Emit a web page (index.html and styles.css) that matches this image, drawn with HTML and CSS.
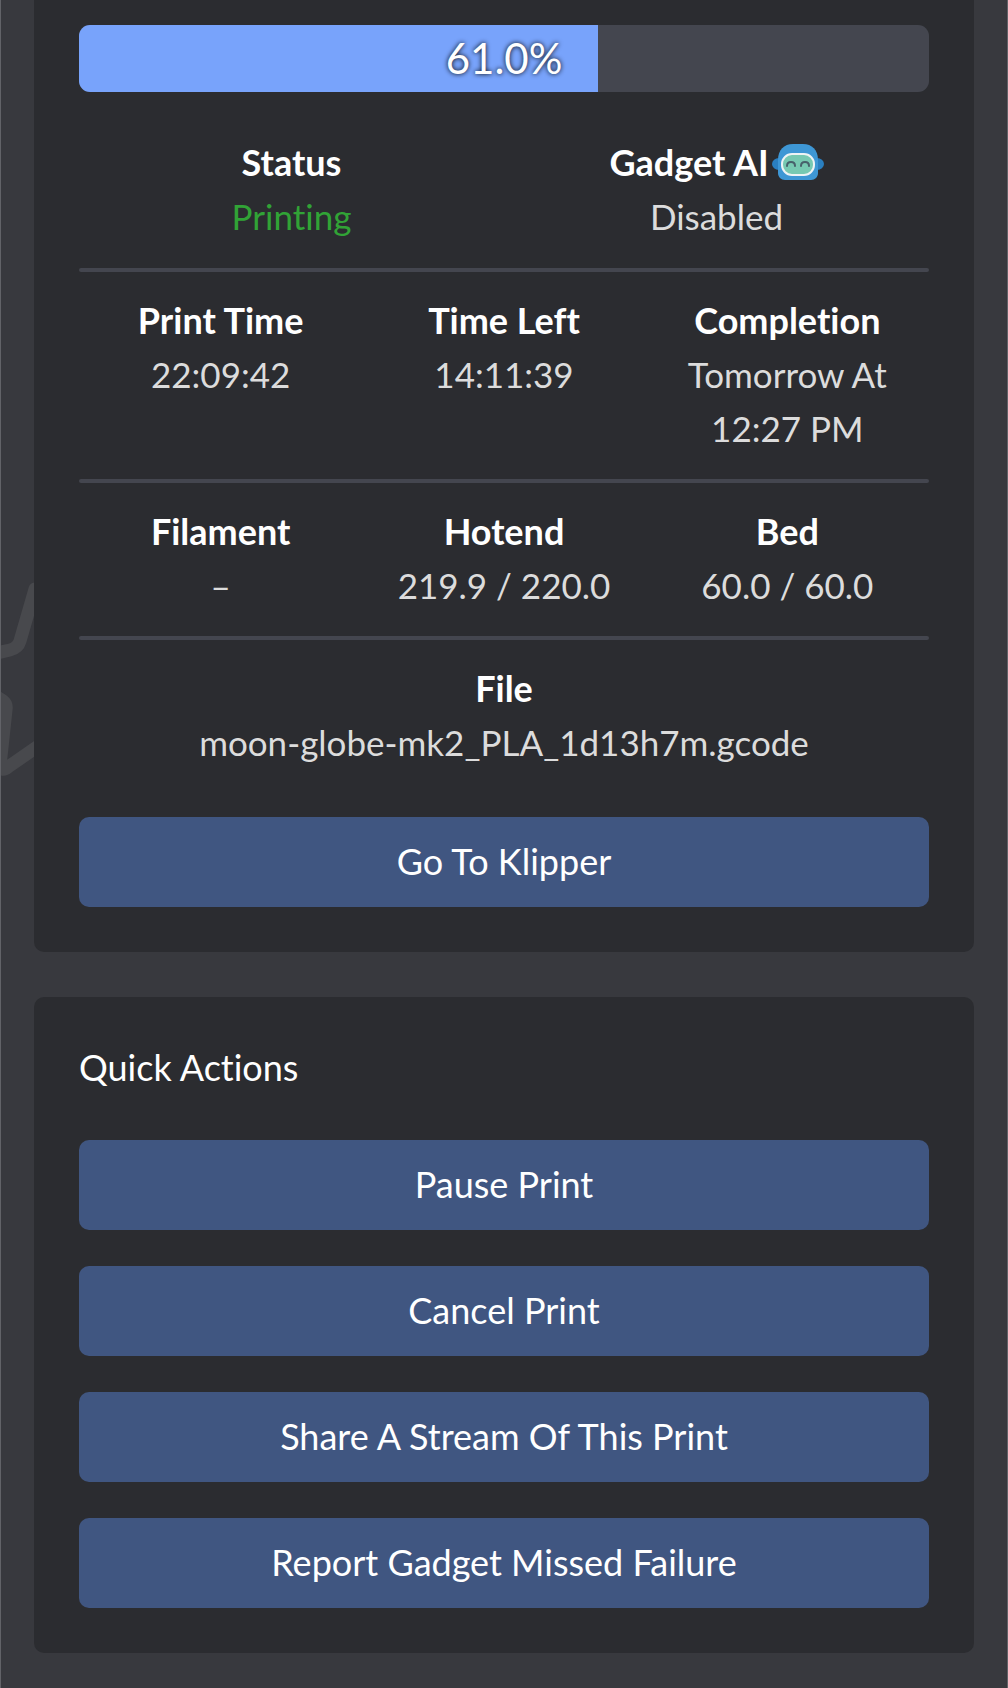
FILE: index.html
```
<!DOCTYPE html>
<html lang="en">
<head>
<meta charset="utf-8">
<meta name="viewport" content="width=device-width, initial-scale=1">
<title>Printer Status</title>
<link rel="stylesheet" href="styles.css">
</head>
<body>
<svg class="backdrop" viewBox="0 0 100 240" aria-hidden="true">
  <path d="M-12 95 L10 90 Q18 88 20 81 L35 29"/>
  <path d="M-12 131 L3 141 Q7 144 6 150 L0 206 Q2 212 8 207 L44 182"/>
</svg>
<main class="page">
  <section class="card card-status">
    <div class="progress" role="progressbar" aria-label="Print progress" aria-valuenow="61" aria-valuemin="0" aria-valuemax="100">
      <div class="progress-fill" style="width: 61%"></div>
      <span class="progress-label">61.0%</span>
    </div>
    <dl class="stats stats-two">
      <div class="stat">
        <dt>Status</dt>
        <dd class="printing">Printing</dd>
      </div>
      <div class="stat">
        <dt class="with-icon">Gadget AI
          <svg class="robot" viewBox="0 0 52 36" aria-hidden="true">
            <ellipse cx="7" cy="20" rx="7" ry="6" fill="#2a7fc0"/>
            <ellipse cx="45" cy="20" rx="7" ry="6" fill="#2a7fc0"/>
            <path d="M6 16C6 6 12 0 21 0h10c9 0 15 6 15 16v13c0 4-3 7-7 7H13c-4 0-7-3-7-7z" fill="#3e97d5"/>
            <rect x="10" y="10" width="32" height="21" rx="10" fill="#77c9b2" stroke="#eef3f5" stroke-width="2"/>
            <path d="M15 22q0-4 4-4t4 4M29 22q0-4 4-4t4 4" fill="none" stroke="#47606b" stroke-width="2" stroke-linecap="round"/>
          </svg>
        </dt>
        <dd>Disabled</dd>
      </div>
    </dl>
    <hr>
    <dl class="stats">
      <div class="stat">
        <dt>Print Time</dt>
        <dd>22:09:42</dd>
      </div>
      <div class="stat">
        <dt>Time Left</dt>
        <dd>14:11:39</dd>
      </div>
      <div class="stat">
        <dt>Completion</dt>
        <dd>Tomorrow At 12:27 PM</dd>
      </div>
    </dl>
    <hr>
    <dl class="stats">
      <div class="stat">
        <dt>Filament</dt>
        <dd>–</dd>
      </div>
      <div class="stat">
        <dt>Hotend</dt>
        <dd>219.9 / 220.0</dd>
      </div>
      <div class="stat">
        <dt>Bed</dt>
        <dd>60.0 / 60.0</dd>
      </div>
    </dl>
    <hr>
    <dl class="stats stats-one">
      <div class="stat">
        <dt>File</dt>
        <dd>moon-globe-mk2_PLA_1d13h7m.gcode</dd>
      </div>
    </dl>
    <button class="button button-spaced" type="button">Go To Klipper</button>
  </section>
  <section class="card">
    <h2 class="title">Quick Actions</h2>
    <div class="actions">
      <button class="button" type="button">Pause Print</button>
      <button class="button" type="button">Cancel Print</button>
      <button class="button" type="button">Share A Stream Of This Print</button>
      <button class="button" type="button">Report Gadget Missed Failure</button>
    </div>
  </section>
</main>
</body>
</html>
```
FILE: styles.css
```
* {
  box-sizing: border-box;
}

body {
  position: relative;
  margin: 0;
  background: #38393e;
  color: #fff;
  font-family: Lato, sans-serif;
  font-size: 36px;
  line-height: 54px;
  font-variant-ligatures: none;
}

/* Faint line drawing behind the cards */
.backdrop {
  position: absolute;
  top: 560px;
  left: 0;
  width: 100px;
  height: 240px;
  fill: none;
  stroke: #48494d;
  stroke-width: 13px;
  stroke-linecap: round;
  stroke-linejoin: round;
}

.page {
  position: relative;
  display: flex;
  flex-direction: column;
  gap: 45px;
  padding: 0 33px 35px;
  border: solid #626368;
  border-width: 0 1px;
}

.card {
  padding: 43px 45px 45px;
  border-radius: 10px;
  background: #2b2c30;
}

.card-status {
  padding-top: 25px;
  padding-bottom: 45px;
  border-radius: 0 0 10px 10px;
}

.progress {
  position: relative;
  height: 67px;
  margin-bottom: 43px;
  overflow: hidden;
  border-radius: 11px;
  background: #44464f;
}

.progress-fill {
  height: 100%;
  background: #78a3fb;
}

.progress-label {
  position: absolute;
  inset: 0;
  font-size: 42px;
  line-height: 67px;
  text-align: center;
  text-shadow: 0 0 5px #000;
}

.stats {
  display: grid;
  grid-template-columns: repeat(3, 1fr);
  margin: 0;
  text-align: center;
}

.stats-two {
  grid-template-columns: repeat(2, 1fr);
  padding-bottom: 2px;
}

.stats-one {
  grid-template-columns: 1fr;
}

dt {
  font-weight: 700;
}

dd {
  margin: 0;
  padding: 0 16px;
  color: #dcdcdc;
  font-size: 35px;
}

.stats .printing {
  color: #31a336;
}

.with-icon {
  display: flex;
  align-items: center;
  justify-content: center;
  gap: 3px;
}

.robot {
  width: 52px;
  height: 36px;
}

hr {
  height: 4px;
  margin: 24px 0 21px;
  border: 0;
  border-radius: 2px;
  background: #44464f;
}

.stats-two + hr {
  margin-top: 23px;
}

.button {
  display: block;
  width: 100%;
  padding: 17px 18px 19px;
  border: 0;
  border-radius: 10px;
  background: #405681;
  color: #fff;
  font: inherit;
  font-variant-ligatures: none;
}

.button-spaced {
  margin-top: 48px;
}

.title {
  margin: 0 0 46px;
  font-size: 36px;
  font-weight: 400;
}

.actions {
  display: grid;
  gap: 36px;
}
```
